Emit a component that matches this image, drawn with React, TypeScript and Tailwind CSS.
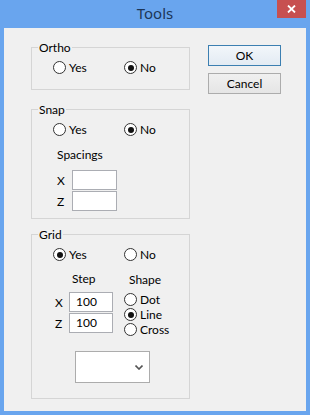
import React from 'react';

const font = { fontFamily: 'Lato, "Noto Sans", sans-serif' };

interface RadioProps {
  label: string;
  checked?: boolean;
  className?: string;
}

const Radio: React.FC<RadioProps> = ({ label, checked, className = '' }) => (
  <div className={`flex items-center h-[15px] ${className}`}>
    <div className="w-[13px] h-[13px] rounded-full border border-[#333333] bg-white flex items-center justify-center shrink-0">
      {checked && <div className="w-[6px] h-[6px] rounded-full bg-[#111111]" />}
    </div>
    <span className="ml-[3px] text-[12px] leading-[14px] text-black">{label}</span>
  </div>
);

const Group: React.FC<{ title: string; className: string; children: React.ReactNode }> = ({
  title,
  className,
  children,
}) => (
  <div className={`relative border border-[#d5d5d5] ${className}`}>
    <span className="absolute -top-[8px] left-[6px] px-[1px] bg-[#f0f0f0] text-[12px] leading-[15px] text-black">
      {title}
    </span>
    {children}
  </div>
);

const TextBox: React.FC<{ value?: string; className?: string }> = ({ value = '', className = '' }) => (
  <div
    className={`h-[20px] border border-[#abadb3] bg-white text-[12px] leading-[18px] pl-[6px] text-black ${className}`}
  >
    {value}
  </div>
);

export default function App() {
  return (
    <div className="w-[310px] h-[415px] bg-[#69a5ee] flex flex-col overflow-hidden" style={font}>
      {/* title bar */}
      <div className="relative h-[28px] shrink-0 flex items-center justify-center">
        <span
          className="text-[15px] leading-[20px] text-[#1c3556] -mt-[3px]"
          style={{ fontFamily: '"Noto Sans", sans-serif' }}
        >
          Tools
        </span>
        <div className="absolute top-0 right-[4px] w-[29px] h-[18px] bg-[#c75050] flex items-center justify-center">
          <svg width="9" height="8" viewBox="0 0 9 8">
            <path d="M1 0.5 L8 7.5 M8 0.5 L1 7.5" stroke="white" strokeWidth="1.8" />
          </svg>
        </div>
      </div>

      {/* client area */}
      <div className="mx-[4px] h-[383px] shrink-0 bg-[#f0f0f0] flex">
        <div className="pl-[27px] pt-[19px] w-[186px] shrink-0">
          <Group title="Ortho" className="h-[43px]">
            <div className="flex pt-[12px] pl-[21px]">
              <Radio label="Yes" className="w-[71px]" />
              <Radio label="No" checked />
            </div>
          </Group>

          <Group title="Snap" className="h-[110px] mt-[19px]">
            <div className="flex pt-[12px] pl-[21px]">
              <Radio label="Yes" className="w-[71px]" />
              <Radio label="No" checked />
            </div>
            <div className="pl-[25px] mt-[10px] text-[12px] leading-[15px] text-black">Spacings</div>
            <div className="pl-[25px] mt-[8px] flex flex-col gap-[1px]">
              <div className="flex items-center">
                <span className="w-[15px] text-[12px] leading-[15px]">X</span>
                <TextBox className="w-[45px]" />
              </div>
              <div className="flex items-center">
                <span className="w-[15px] text-[12px] leading-[15px]">Z</span>
                <TextBox className="w-[45px]" />
              </div>
            </div>
          </Group>

          <Group title="Grid" className="h-[165px] mt-[15px]">
            <div className="flex pt-[12px] pl-[21px]">
              <Radio label="Yes" checked className="w-[71px]" />
              <Radio label="No" />
            </div>
            <div className="flex mt-[9px]">
              <div className="pl-[23px] w-[92px]">
                <div className="pl-[17px] text-[12px] leading-[15px]">Step</div>
                <div className="mt-[6px] flex flex-col gap-[1px]">
                  <div className="flex items-center">
                    <span className="w-[14px] text-[12px] leading-[15px]">X</span>
                    <TextBox value="100" className="w-[44px]" />
                  </div>
                  <div className="flex items-center">
                    <span className="w-[14px] text-[12px] leading-[15px]">Z</span>
                    <TextBox value="100" className="w-[44px]" />
                  </div>
                </div>
              </div>
              <div className="pt-[1px]">
                <div className="pl-[5px] text-[12px] leading-[15px]">Shape</div>
                <div className="mt-[5px] flex flex-col">
                  <Radio label="Dot" />
                  <Radio label="Line" checked />
                  <Radio label="Cross" />
                </div>
              </div>
            </div>
            <div className="pl-[43px] mt-[14px]">
              <div className="w-[75px] h-[32px] border border-[#acacac] bg-white flex items-center justify-end pr-[6px]">
                <svg width="8" height="5" viewBox="0 0 8 5">
                  <path d="M0.5 0.5 L4 4 L7.5 0.5" stroke="#555555" strokeWidth="1.6" fill="none" />
                </svg>
              </div>
            </div>
          </Group>
        </div>

        <div className="ml-[18px] pt-[17px] flex flex-col gap-[7px]">
          <button className="w-[73px] h-[21px] border border-[#3c7fb1] bg-gradient-to-b from-[#f2f6fa] to-[#e3ebf3] text-[12px] leading-[15px] text-black">
            OK
          </button>
          <button className="w-[73px] h-[21px] border border-[#acacac] bg-gradient-to-b from-[#f0f0f0] to-[#e5e5e5] text-[12px] leading-[15px] text-black">
            Cancel
          </button>
        </div>
      </div>
    </div>
  );
}
